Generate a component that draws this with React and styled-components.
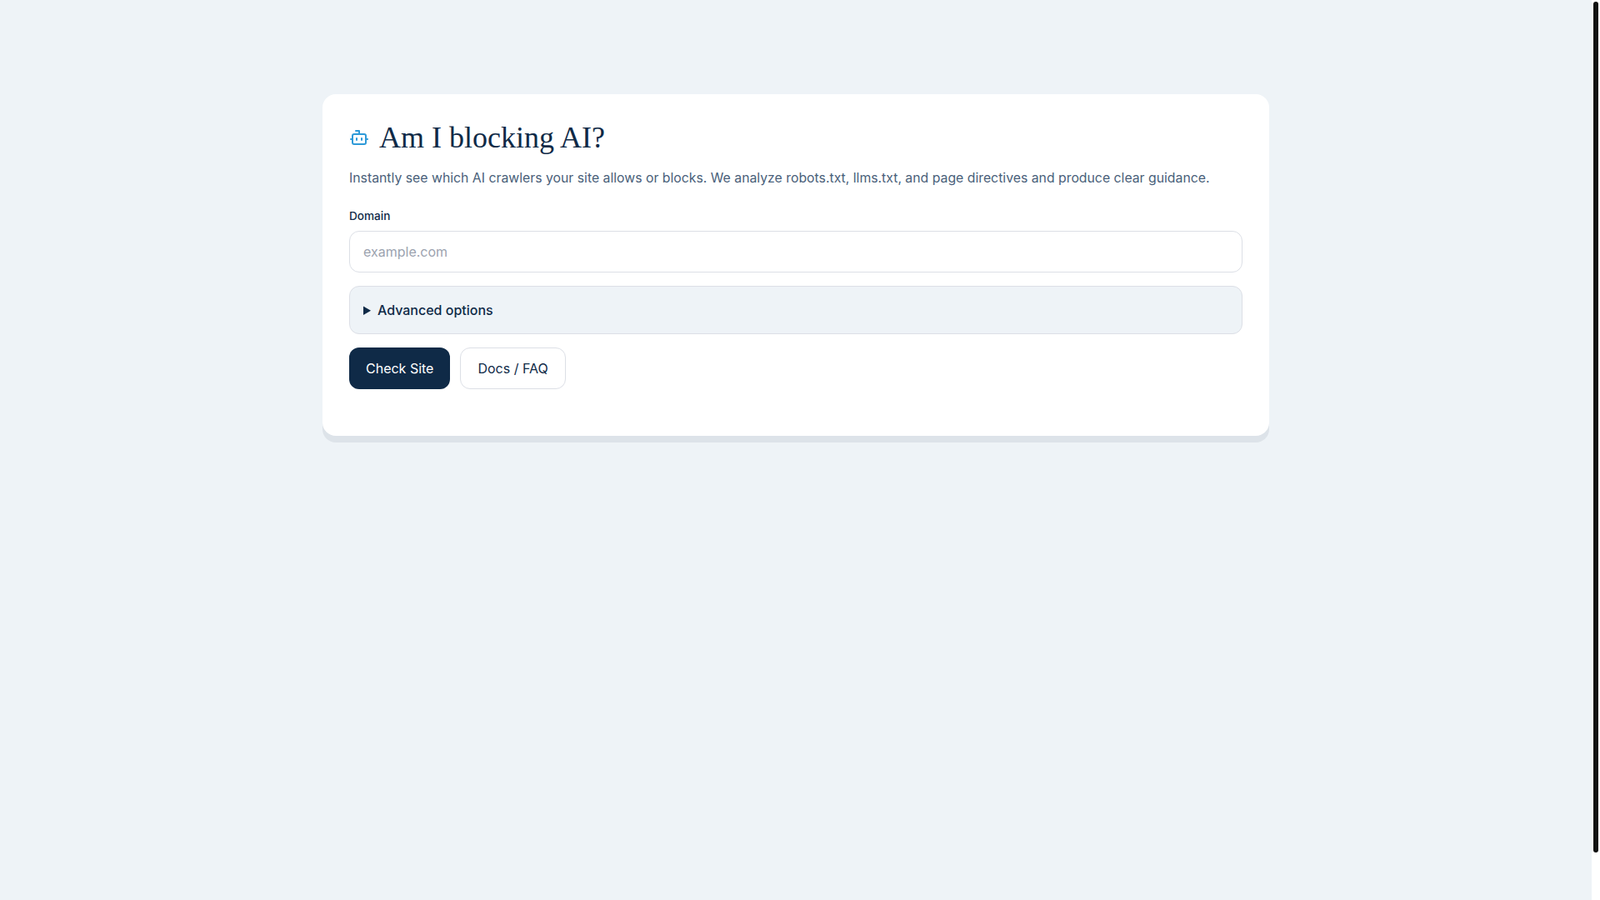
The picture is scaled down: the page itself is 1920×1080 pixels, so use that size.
import styled, { createGlobalStyle } from "styled-components";
import { Bot } from "lucide-react";

const GlobalStyle = createGlobalStyle`
  * {
    box-sizing: border-box;
  }

  body {
    margin: 0;
    background: #eef3f7;
    font-family: Inter, "Liberation Sans", sans-serif;
    color: #0f2a47;
  }
`;

const Shell = styled.div`
  display: flex;
  height: 100vh;
  overflow: hidden;
`;

const Page = styled.main`
  flex: 1;
  padding: 113px 32px 32px;
`;

const ScrollRail = styled.div`
  flex: none;
  width: 10px;
  padding: 2px 2px 57px;
  background: #ffffff;
`;

const ScrollThumb = styled.div`
  height: 100%;
  background: #111111;
  border-radius: 3px;
`;

const Card = styled.section`
  max-width: 1136px;
  margin: 0 auto;
  padding: 32px 32px 56px;
  background: #ffffff;
  border-radius: 16px;
  box-shadow: 0 8px 0 #dde3e9;
`;

const TitleRow = styled.div`
  display: flex;
  align-items: center;
  gap: 12px;
  color: #2e9ad8;
`;

const Title = styled.h1`
  margin: 0;
  font-family: "Liberation Serif", serif;
  font-size: 36px;
  font-weight: 400;
  line-height: 40px;
  color: #0f2a47;
`;

const Lead = styled.p`
  margin: 17px 0 0;
  font-size: 15.8px;
  line-height: 24px;
  color: #4a5f7a;
`;

const Label = styled.label`
  display: block;
  margin: 23px 0 8px;
  font-size: 13.6px;
  font-weight: 500;
  line-height: 20px;
  color: #0f2a47;
`;

const DomainInput = styled.input`
  display: block;
  width: 100%;
  height: 50px;
  padding: 0 16px;
  font: inherit;
  font-size: 16px;
  color: #0f2a47;
  background: #ffffff;
  border: 1px solid #dcdfe6;
  border-radius: 12px;
  outline: none;

  &::placeholder {
    color: #9ca3af;
  }
`;

const Advanced = styled.details`
  margin-top: 16px;
  padding: 16px;
  background: #eef3f7;
  border: 1px solid #dcdfe6;
  border-radius: 12px;
`;

const Summary = styled.summary`
  font-size: 16px;
  font-weight: 500;
  line-height: 24px;
  color: #0f2a47;
  cursor: pointer;
`;

const Actions = styled.div`
  display: flex;
  gap: 12px;
  margin-top: 16px;
`;

const Button = styled.button`
  height: 50px;
  padding: 0 20px;
  font: inherit;
  font-size: 16px;
  font-weight: 400;
  color: ${(p) => (p.$primary ? "#ffffff" : "#0f2a47")};
  background: ${(p) => (p.$primary ? "#0f2a47" : "#ffffff")};
  border: ${(p) => (p.$primary ? "none" : "1px solid #dcdfe6")};
  border-radius: 12px;
  cursor: pointer;
`;

function App() {
  return (
    <>
      <GlobalStyle />
      <Shell>
        <Page>
          <Card>
            <TitleRow>
              <Bot size={24} />
              <Title>Am I blocking AI?</Title>
            </TitleRow>
            <Lead>
              Instantly see which AI crawlers your site allows or blocks. We
              analyze robots.txt, llms.txt, and page directives and produce
              clear guidance.
            </Lead>
            <form>
              <Label htmlFor="domain">Domain</Label>
              <DomainInput id="domain" type="text" placeholder="example.com" />
              <Advanced>
                <Summary>Advanced options</Summary>
              </Advanced>
              <Actions>
                <Button type="button" $primary>
                  Check Site
                </Button>
                <Button type="button">Docs / FAQ</Button>
              </Actions>
            </form>
          </Card>
        </Page>
        <ScrollRail>
          <ScrollThumb />
        </ScrollRail>
      </Shell>
    </>
  );
}

export default App;
